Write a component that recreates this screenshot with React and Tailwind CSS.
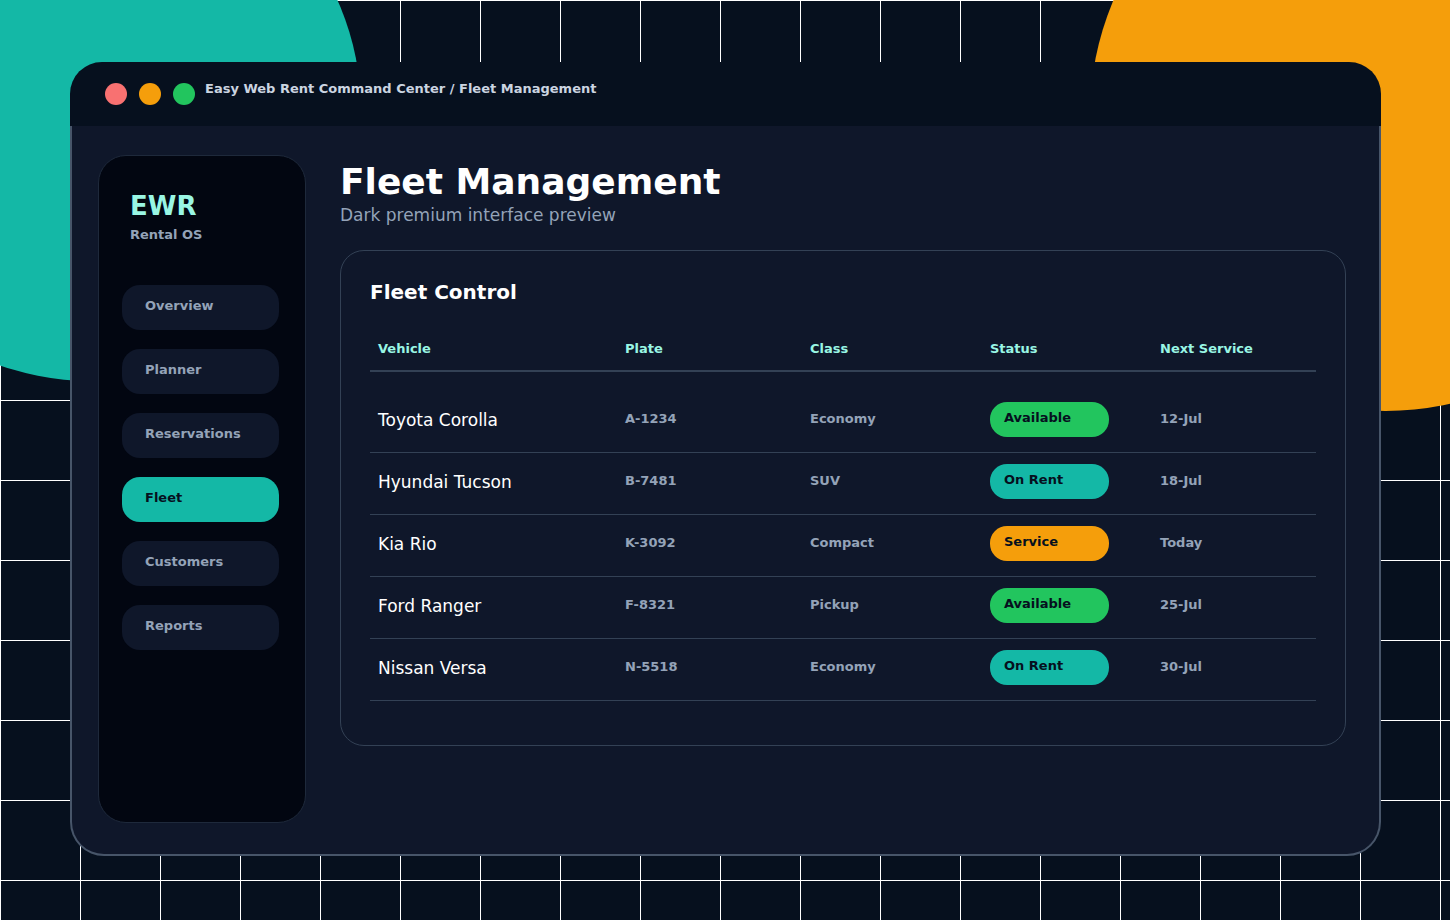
import clsx from "clsx";

const navItems = ["Overview", "Planner", "Reservations", "Fleet", "Customers", "Reports"];

const columns = ["Vehicle", "Plate", "Class", "Status", "Next Service"];

const vehicles = [
    { name: "Toyota Corolla", plate: "A-1234", type: "Economy", status: "Available", service: "12-Jul" },
    { name: "Hyundai Tucson", plate: "B-7481", type: "SUV", status: "On Rent", service: "18-Jul" },
    { name: "Kia Rio", plate: "K-3092", type: "Compact", status: "Service", service: "Today" },
    { name: "Ford Ranger", plate: "F-8321", type: "Pickup", status: "Available", service: "25-Jul" },
    { name: "Nissan Versa", plate: "N-5518", type: "Economy", status: "On Rent", service: "30-Jul" },
];

const statusColors = {
    "Available": "bg-[#22c55e]",
    "On Rent": "bg-[#14b8a6]",
    "Service": "bg-[#f59e0b]",
};

const TitleBar = () => {
    return (
        <header className="flex h-16 rounded-t-[32px] bg-[#06101e] pl-[35px]">
            <div className="flex gap-3 pt-[21px]">
                <span className="size-[22px] rounded-full bg-[#f87171]" />
                <span className="size-[22px] rounded-full bg-[#f59e0b]" />
                <span className="size-[22px] rounded-full bg-[#22c55e]" />
            </div>
            <p className="ml-[10px] pt-[19px] text-[13px] leading-[15px] font-bold text-[#cbd5e1]">
                Easy Web Rent Command Center / Fleet Management
            </p>
        </header>
    );
};

const Sidebar = () => {
    return (
        <aside className="mt-[29px] ml-[26px] h-[668px] w-[208px] shrink-0 rounded-[28px] border border-[#1e293b] bg-[#020611] px-[23px] pt-[35px]">
            <div className="pl-2">
                <p className="text-[26px] leading-[30px] font-bold text-[#99f6e4]">EWR</p>
                <p className="mt-[6px] text-[13px] leading-[15px] font-bold text-[#94a3b8]">Rental OS</p>
            </div>
            <nav className="mt-[43px] flex flex-col gap-[19px]">
                {navItems.map((item) => (
                    <a key={item}
                        className={clsx(
                            "h-[45px] w-[157px] rounded-[18px] pt-[13px] pl-[23px] text-[13px] leading-[15px] font-bold",
                            item === "Fleet" ? "bg-[#14b8a6] text-[#06101e]" : "bg-[#0f172a] text-[#94a3b8]"
                        )}>
                        {item}
                    </a>
                ))}
            </nav>
        </aside>
    );
};

const VehicleRow = (prop) => {
    return (
        <div className="grid h-[62px] grid-cols-[247px_185px_180px_170px_1fr] items-start border-b border-[#334155] pl-2 text-[13px] leading-[15px] font-bold text-[#94a3b8]">
            <span className="pt-[19px] text-[17px] leading-5 font-normal text-white">{prop.name}</span>
            <span className="pt-5">{prop.plate}</span>
            <span className="pt-5">{prop.type}</span>
            <span className={clsx("mt-[11px] h-[35px] w-[119px] rounded-[17px] pt-2 pl-[14px] text-[#06101e]", statusColors[prop.status])}>
                {prop.status}
            </span>
            <span className="pt-5">{prop.service}</span>
        </div>
    );
};

const FleetCard = () => {
    return (
        <section className="mt-[25px] h-[496px] w-[1006px] rounded-3xl border border-[#334155] p-[29px]">
            <h2 className="text-[20px] leading-6 font-bold text-white">Fleet Control</h2>
            <div className="mt-[37px] grid h-[31px] grid-cols-[247px_185px_180px_170px_1fr] border-b-2 border-[#334155] pl-2 text-[13px] leading-[15px] font-bold text-[#99f6e4]">
                {columns.map((column) => (
                    <span key={column}>{column}</span>
                ))}
            </div>
            <div className="mt-[19px]">
                {vehicles.map((vehicle) => (
                    <VehicleRow key={vehicle.name} {...vehicle} />
                ))}
            </div>
        </section>
    );
};

export default function App() {
    return (
        <div className="relative h-[920px] w-[1450px] overflow-hidden bg-[#06101e] bg-[linear-gradient(#fff_1px,transparent_1px),linear-gradient(90deg,#fff_1px,transparent_1px)] bg-[size:80px_80px] px-[70px] pt-[62px] font-['DejaVu_Sans',sans-serif] whitespace-nowrap">
            <div className="absolute -top-[160px] -left-[180px] size-[541px] rounded-full bg-[#14b8a6]" />
            <div className="absolute -top-[180px] left-[1090px] size-[591px] rounded-full bg-[#f59e0b]" />

            <div className="relative w-[1311px]">
                <TitleBar />
                <div className="flex h-[730px] rounded-b-[34px] border-x-2 border-b-2 border-[#475569] bg-[#0f172a]">
                    <Sidebar />
                    <main className="ml-[34px] pt-[35px]">
                        <h1 className="text-[36px] leading-[42px] font-bold text-white">Fleet Management</h1>
                        <p className="mt-[2px] text-[17px] leading-5 text-[#94a3b8]">Dark premium interface preview</p>
                        <FleetCard />
                    </main>
                </div>
            </div>
        </div>
    );
}
